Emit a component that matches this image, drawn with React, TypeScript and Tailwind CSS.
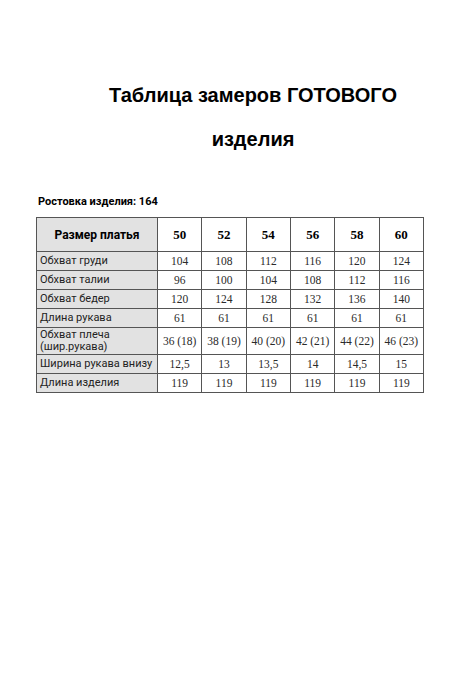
const sizes = ['50', '52', '54', '56', '58', '60'];

const rows: { label: string[]; values: string[]; tall?: boolean }[] = [
  { label: ['Обхват груди'], values: ['104', '108', '112', '116', '120', '124'] },
  { label: ['Обхват талии'], values: ['96', '100', '104', '108', '112', '116'] },
  { label: ['Обхват бедер'], values: ['120', '124', '128', '132', '136', '140'] },
  { label: ['Длина рукава'], values: ['61', '61', '61', '61', '61', '61'] },
  { label: ['Обхват плеча', '(шир.рукава)'], values: ['36 (18)', '38 (19)', '40 (20)', '42 (21)', '44 (22)', '46 (23)'], tall: true },
  { label: ['Ширина рукава внизу'], values: ['12,5', '13', '13,5', '14', '14,5', '15'] },
  { label: ['Длина изделия'], values: ['119', '119', '119', '119', '119', '119'] },
];

const App = () => {
  return (
    <div className="w-[460px] h-[690px] bg-white text-[#111] font-['Roboto',sans-serif]">
      {/* Title */}
      <div className="pt-[73px] pl-[46px] text-center text-[20px] font-bold leading-[44px] text-black font-['Liberation_Sans',sans-serif]">
        <p>Таблица замеров ГОТОВОГО</p>
        <p>изделия</p>
      </div>

      {/* Height note */}
      <p className="mt-[34px] ml-[38px] text-[11px] font-bold leading-[14px] text-black">Ростовка изделия: 164</p>

      {/* Size table */}
      <table className="mt-[8px] ml-[36px] w-[387px] table-fixed border-collapse border border-[#444]">
        <colgroup>
          <col className="w-[121px]" />
          {sizes.map((s) => (
            <col key={s} className="w-[44.33px]" />
          ))}
        </colgroup>
        <thead>
          <tr className="h-[34px]">
            <th className="border border-[#555] bg-[#e2e2e2] text-[12px] font-bold text-black">Размер платья</th>
            {sizes.map((s) => (
              <th key={s} className="border border-[#555] text-[13px] font-bold font-['Liberation_Serif',serif] text-black">
                {s}
              </th>
            ))}
          </tr>
        </thead>
        <tbody>
          {rows.map((row) => (
            <tr key={row.label.join(' ')} className={row.tall ? 'h-[27px]' : 'h-[19px]'}>
              <td className="border border-[#555] bg-[#e2e2e2] px-[3px] text-[11px] leading-[12px] text-[#222]">
                {row.label.map((l) => (
                  <div key={l}>{l}</div>
                ))}
              </td>
              {row.values.map((v, i) => (
                <td key={i} className="border border-[#555] p-0 text-center text-[11.5px] leading-[12px] font-['Liberation_Serif',serif] text-[#2a2a2a] whitespace-nowrap">
                  {v}
                </td>
              ))}
            </tr>
          ))}
        </tbody>
      </table>
    </div>
  );
};

export default App;
